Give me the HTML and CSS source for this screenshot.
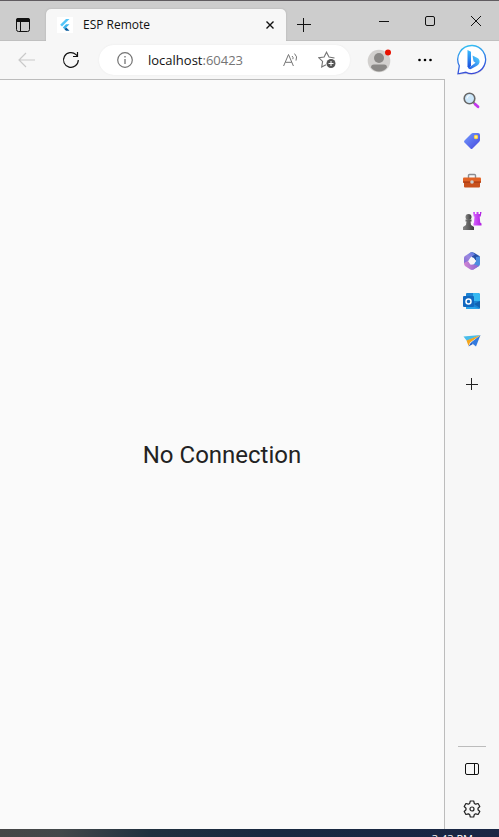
FILE: index.html
```html
<!DOCTYPE html>
<html lang="en">
<head>
<meta charset="utf-8">
<title>ESP Remote</title>
<link rel="stylesheet" href="styles.css">
</head>
<body>
<div class="window">
  <header class="titlebar">
    <button class="tab-actions" aria-label="Tab actions"><svg width="14" height="14" viewBox="0 0 14 14"><rect x=".5" y=".5" width="13" height="13" rx="2" fill="none" stroke="#111"/><path d="M0 4V2a2 2 0 0 1 2-2h10a2 2 0 0 1 2 2v2z" fill="#111"/><path d="M4.500 4v9.500" stroke="#111"/></svg></button>
    <div class="tab">
      <svg class="favicon" width="16" height="16" viewBox="0 0 16 16"><path fill="#fff" d="M0 0h16v16H0z"/><path d="M9 2h3.500L5 9.500 3.200 7.800z" fill="#54c5f8"/><path d="M9 7.200h3.500L9.200 10.500 7.500 12.200 5.800 10.500z" fill="#40b6ee"/><path d="M7.500 12.200l1.700-1.700 3.300 3.300H9z" fill="#01579b"/></svg>
      <span class="tab-title">ESP Remote</span>
      <button class="tab-close" aria-label="Close tab"><svg width="8" height="8" viewBox="0 0 8 8"><path d="M.5.5l7 7M7.500.5l-7 7" stroke="#111" stroke-width="1.400"/></svg></button>
    </div>
    <button class="new-tab" aria-label="New tab"><svg width="14" height="14" viewBox="0 0 14 14"><path d="M0 6.500h14M6.500 0v14" stroke="#111"/></svg></button>
    <div class="window-controls">
      <button aria-label="Minimize"><svg width="10" height="10" viewBox="0 0 10 10"><path d="M0 5.500h10" stroke="#111"/></svg></button>
      <button aria-label="Maximize"><svg width="10" height="10" viewBox="0 0 10 10"><rect x=".5" y=".5" width="9" height="9" rx="1.500" fill="none" stroke="#111"/></svg></button>
      <button aria-label="Close"><svg width="10" height="10" viewBox="0 0 10 10"><path d="M0 0l10 10M10 0L0 10" stroke="#111"/></svg></button>
    </div>
  </header>

  <nav class="toolbar">
    <button class="back" aria-label="Back" disabled><svg width="18" height="16" viewBox="0 0 18 16"><path d="M17 8H1.500M8 1L1 8l7 7" fill="none" stroke="#c9c9c9" stroke-width="1.200"/></svg></button>
    <button class="reload" aria-label="Refresh"><svg width="18" height="18" viewBox="0 0 18 18"><path d="M16.300 9A7.400 7.400 0 1 1 14 3.600L15.500 5" fill="none" stroke="#111" stroke-width="1.200"/><path d="M15.500 1v4.500H11" fill="none" stroke="#111" stroke-width="1.200"/></svg></button>
    <div class="address">
      <button aria-label="Site information"><svg width="16" height="16" viewBox="0 0 16 16"><circle cx="8" cy="8" r="7.300" fill="none" stroke="#747474" stroke-width="1.200"/><path d="M8 7v5M8 4v1.500" stroke="#747474" stroke-width="1.300"/></svg></button>
      <span class="url">localhost<span class="port">:60423</span></span>
      <button class="read" aria-label="Read aloud"><svg width="16" height="14" viewBox="0 0 16 14"><path d="M.6 13L5.500 1.500 10.400 13M2.300 9.300h6.400" fill="none" stroke="#747474"/><path d="M9 3q1.600 1.200.9 3.200M11.500.6q3.400 3 1.500 7" fill="none" stroke="#747474"/></svg></button>
      <button aria-label="Add to favorites"><svg width="18" height="18" viewBox="0 0 18 18"><path d="M16.500 7L11 6.100 8.500 1.200 6.100 6.100.9 6.800l3.700 3.600-.9 5.700L8 13.800" fill="none" stroke="#747474" stroke-width="1.100"/><circle cx="13" cy="12.500" r="4.500" fill="#555"/><path d="M10.500 12.500h5M13 10v5" stroke="#fff"/></svg></button>
    </div>
    <button class="profile" aria-label="Profile"><svg width="25" height="25" viewBox="0 0 25 25"><circle cx="12" cy="13" r="11.300" fill="#d2d0ce"/><circle cx="12" cy="10" r="5" fill="#8a8886"/><path d="M4 19.500Q4 16.500 7 16.500h10q3 0 3 3Q17 23.500 12 23.500T4 19.500z" fill="#8a8886"/><circle cx="21" cy="4.500" r="3" fill="#e81100"/></svg></button>
    <button class="more" aria-label="Settings and more"><svg width="14" height="4" viewBox="0 0 14 4"><circle cx="1.500" cy="2" r="1.300"/><circle cx="7" cy="2" r="1.300"/><circle cx="12.500" cy="2" r="1.300"/></svg></button>
    <button class="bing" aria-label="Discover"><svg width="32" height="32" viewBox="0 0 32 32">
      <defs><linearGradient id="ring" x1=".3" y1="0" x2=".5" y2="1"><stop stop-color="#35c0f2"/><stop offset=".5" stop-color="#2f7de6"/><stop offset="1" stop-color="#3a48d8"/></linearGradient><linearGradient id="b" x1="0" y1="0" x2="0" y2="1"><stop stop-color="#37bdff"/><stop offset="1" stop-color="#1b48dc"/></linearGradient><linearGradient id="bowl" x1="0" y1="1" x2="1" y2="0"><stop stop-color="#2358e4"/><stop offset="1" stop-color="#54daff"/></linearGradient></defs>
      <path d="M16.500 3A14 14 0 1 1 10 29.800L2.500 31l1.500-7A14 14 0 0 1 16.500 3z" fill="#999" opacity=".3"/>
      <path d="M16.500 1.500A14 14 0 1 1 10 28.300L2 29.800l1.300-8A14 14 0 0 1 16.500 1.500z" fill="#fff" stroke="url(#ring)" stroke-width="1.300"/>
      <path d="M11.500 6l3.500 1.800v13.500l-1.500 3.200-2-2z" fill="url(#b)"/><path d="M16.500 11.500l5 2.500q2.500 1.500 2 4.500-.3 2-2.500 3.300L15 25q-2.600.8-3.500-2.500 1.500 1 3-.1l5-3.700-2-1.500z" fill="url(#bowl)"/>
    </svg></button>
  </nav>

  <div class="content">
    <main class="page"><p class="message">No Connection</p></main>
    <aside class="sidebar">
      <button aria-label="Search"><svg width="18" height="18" viewBox="0 0 18 18"><path d="M10.500 10.500l2 2" stroke="#777" stroke-width="2"/><path d="M12.200 12.200l2.800 2.600" stroke="#c336ee" stroke-width="2.800" stroke-linecap="round"/><circle cx="6.500" cy="6.500" r="5.300" fill="#cce7fa" stroke="#686868" stroke-width="1.600"/><path d="M4 6.500a3 3 0 0 1 2.500-3" stroke="#fff" fill="none"/></svg></button>
      <button aria-label="Shopping"><svg width="18" height="18" viewBox="0 0 18 18"><defs><linearGradient id="tag" x1="0" y1="0" x2="1" y2="1"><stop stop-color="#729cff"/><stop offset="1" stop-color="#4747dc"/></linearGradient></defs><path d="M10 1h5q2 0 2 2v5q0 1-1 2l-6.500 6.500q-1 1-2 0L1.500 10.500q-1-1 0-2l6.500-6.500q1-1 2-1z" fill="url(#tag)"/><circle cx="13" cy="5" r="1.600" fill="#fff2a8" stroke="#ffd740" stroke-width="1.200"/></svg></button>
      <button aria-label="Tools"><svg width="18" height="18" viewBox="0 0 18 18"><path d="M5.500 6V3.500q0-1 1-1h5q1 0 1 1V6" fill="none" stroke="#8b8d92" stroke-width="1.400"/><rect y="5.500" width="18" height="5.500" rx="1" fill="#e26325"/><path d="M1 10h16v4.500q0 1-1 1H2q-1 0-1-1z" fill="#c8501c"/><path d="M0 10h18" stroke="#9c3210"/><circle cx="9" cy="10" r="1.800" fill="#ccc"/></svg></button>
      <button aria-label="Games"><svg width="20" height="20" viewBox="0 0 20 20"><defs><linearGradient id="pawn"><stop stop-color="#858585"/><stop offset="1" stop-color="#3d3d3d"/></linearGradient><linearGradient id="rook"><stop stop-color="#d865ff"/><stop offset="1" stop-color="#ae1ee0"/></linearGradient></defs><path d="M11 1h2v2h1.500V1h2v2H18V1h1.500l-.8 4.500h-1l.5 6 1.300 1v2h-8v-2l.5-1 .5-6h-.8z" fill="url(#rook)"/><g fill="url(#pawn)"><circle cx="6.500" cy="6" r="3"/><path d="M3.500 8.500h6v2H8.500l.5 3.500 3 2v3H1v-3l3-2 .5-3.500h-1z"/></g></svg></button>
      <button aria-label="Microsoft 365"><svg width="18" height="18" viewBox="0 0 18 18"><defs><linearGradient id="left" x1="1" y1="0" x2="0" y2="1"><stop stop-color="#527ce5"/><stop offset=".5" stop-color="#9d87df"/><stop offset="1" stop-color="#8068d4"/></linearGradient><linearGradient id="foot"><stop stop-color="#d386d2"/><stop offset="1" stop-color="#8764d2"/></linearGradient></defs><path d="M7 .8Q9-.2 11 .8l5 3q1 .7 1 2v6l-4-3L9 5z" fill="#2851a7"/><path d="M7 .8L2 4Q1 4.600 1 6v6l4.500-3L8 5l4-2.500L10 .5Q8.500 0 7 .8z" fill="url(#left)"/><path d="M13 9V5l3.500-.5Q17 5 17 6v6q0 1.400-1 2l-5 3q-1.500 1-3.500 0L7 14l4-2z" fill="#4b8edf"/><path d="M1 11l4-2 2.500 3.500h4L16 14l-5 3.200q-2 1-4 0L2 14q-1-.8-1-3z" fill="url(#foot)"/><path d="M7.500 5.800h3.300L12.800 9l-2 3.200H7.300L5.400 9z" fill="#f7f7f7"/></svg></button>
      <button aria-label="Outlook"><svg width="18" height="18" viewBox="0 0 18 18"><path d="M3 2q0-1 1-1h11q2 0 2 2v13q0 1-1 1H4q-1 0-1-1z" fill="#1b82d2"/><path d="M10 1h5q2 0 2 2v6h-7z" fill="#35b8f1"/><path d="M11 12l6-3v7z" fill="#1262b0"/><path d="M4 12l13 5H4q-1 0-1-1z" fill="#29a4ea"/><rect x="0" y="4" width="11" height="11" rx="1" fill="#1168c0"/><circle cx="5.500" cy="9.500" r="2.500" fill="none" stroke="#fff" stroke-width="1.500"/></svg></button>
      <button aria-label="Drop"><svg width="18" height="18" viewBox="0 0 18 18"><path d="M.5 4.500L17.500 3 4 9z" fill="#48bce9"/><path d="M17.500 3L13 14.500 8 10.500z" fill="#347bdf"/><path d="M3.500 8.500l14-5.500L7 10.500 5.500 14z" fill="#f5a51b"/><path d="M5.500 14.500l2.500-4 2 1.500z" fill="#245bc0"/></svg></button>
      <button class="add" aria-label="Customize sidebar"><svg width="12" height="12" viewBox="0 0 12 12"><path d="M0 6.500h12M5.500 0v12" stroke="#222"/></svg></button>
      <hr>
      <button aria-label="Hide sidebar"><svg width="14" height="12" viewBox="0 0 14 12"><rect x=".5" y=".5" width="13" height="11" rx="1.500" fill="none" stroke="#111"/><path d="M9.500 0v12" stroke="#111"/></svg></button>
      <button aria-label="Settings"><svg width="18" height="18" viewBox="0 0 18 18"><path d="M7.300 1h3.400l.6 2.400 1.400.8L15.100 3.500l1.700 3L15 8.200v1.600l1.800 1.700-1.700 3-2.400-.7-1.400.8-.6 2.400H7.300l-.6-2.400-1.400-.8-2.400.7-1.700-3L3 9.800V8.200L1.200 6.500l1.700-3 2.400.7 1.400-.8z" fill="none" stroke="#222" stroke-width="1.200" stroke-linejoin="round"/><circle cx="9" cy="9" r="2" fill="none" stroke="#222" stroke-width="1.200"/></svg></button>
    </aside>
  </div>
  <footer class="taskbar"><time class="clock">3:43 PM</time></footer>
</div>
</body>
</html>
```
FILE: styles.css
```css
* { box-sizing: border-box; }

body {
  margin: 0;
  font-family: "Open Sans", "Noto Sans", sans-serif;
  color: #111;
}

button {
  display: flex;
  flex: none;
  align-items: center;
  justify-content: center;
  padding: 0;
  border: 0;
  background: none;
}

svg { display: block; flex: none; }

.window {
  display: flex;
  flex-direction: column;
  height: 100vh;
  overflow: hidden;
  background: #f7f7f7;
}

.titlebar {
  display: flex;
  flex: none;
  height: 41px;
  border-top: 1px solid #605c60;
  background: #cdcdcd;
  box-shadow: inset 0 -1px #c0c0c0;
}

.tab-actions { width: 46px; padding-top: 8px; }

.tab {
  position: relative;
  display: flex;
  flex: 0 1 240px;
  align-items: center;
  margin-top: 8px;
  padding: 0 10px 0 11px;
  border-radius: 5px 5px 0 0;
  background: #f7f7f7;
  box-shadow: 0 0 2px #aaa;
  clip-path: inset(-2px -2px 0 -2px);
}

.tab-title { flex: 1; margin-left: 10px; font-size: 12px; line-height: 16px; }
.tab-close { width: 12px; height: 20px; }
.new-tab { width: 36px; padding-top: 8px; }

.window-controls { display: flex; margin-left: auto; }
.window-controls button { width: 46px; height: 40px; }

.toolbar {
  display: flex;
  flex: none;
  align-items: center;
  height: 38px;
  background: #f7f7f7;
}

.back { width: 36px; padding-left: 18px; }
.reload { width: 18px; margin-left: 26px; }

.address {
  display: flex;
  flex: 1;
  align-items: center;
  height: 30px;
  margin-left: 19px;
  padding: 0 14px 0 18px;
  border-radius: 15px;
  background: #fff;
  box-shadow: 0 0 2px #e8e8e8;
}

.url { flex: 1; margin-left: 15px; font-size: 13px; line-height: 20px; }
.port { color: #757575; }
.read { margin-right: 19px; }
.profile { width: 25px; margin-left: 17px; }
.more { width: 14px; margin-left: 26px; }
.bing { width: 32px; margin: 0 11px 0 24px; }

.content { display: flex; flex: 1; min-height: 0; }

.page {
  display: flex;
  flex: 1;
  align-items: center;
  justify-content: center;
  border-top: 1px solid #bcbcbc;
  border-right: 1px solid #bcbcbc;
  background: #fafafa;
}

.message {
  margin: 0;
  font-family: Roboto, sans-serif;
  font-size: 24px;
  line-height: 28px;
  color: #222;
}

.sidebar {
  display: flex;
  flex: none;
  flex-direction: column;
  align-items: center;
  width: 54px;
  padding-top: 2px;
}

.sidebar button { width: 40px; height: 40px; }
.sidebar .add { margin-top: 3px; }

.sidebar hr {
  width: 28px;
  margin: auto 0 2px;
  border: 0;
  border-top: 1px solid #bcbcbc;
}

.taskbar {
  display: flex;
  flex: none;
  justify-content: flex-end;
  height: 8px;
  padding: 2px 26px 0 0;
  overflow: hidden;
  background: linear-gradient(90deg, #464646 0, #43484a 12%, #20303f 30%, #182840 55%, #1a2745);
}

.clock { font-size: 11px; line-height: 16px; color: #fff; }
```
